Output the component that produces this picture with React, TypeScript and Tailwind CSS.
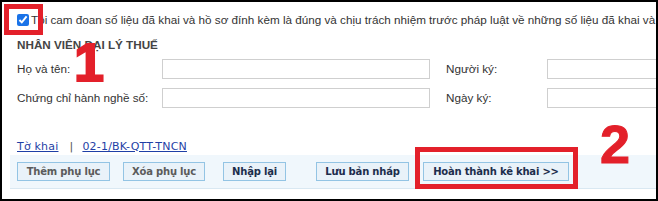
const btn =
  "h-[19px] shrink-0 border border-[#93c4e4] bg-[#e9f2f9] font-['DejaVu_Sans',Verdana,sans-serif] text-[10px] font-bold leading-[17px] tracking-[-0.2px]";

export default function App() {
  return (
    <div className="relative h-[201px] w-[658px] overflow-hidden border-2 border-black bg-white font-['Liberation_Sans',Arial,sans-serif] text-[11.7px] text-[#333]">
      {/* cam đoan */}
      <div className="flex h-[36px] items-center gap-[2px] whitespace-nowrap pl-[15px]">
        <input type="checkbox" defaultChecked readOnly className="h-[12px] w-[12px] shrink-0 accent-[#1a73e8]" />
        <span>
          Tôi cam đoan số liệu đã khai và hồ sơ đính kèm là đúng và chịu trách nhiệm trước pháp luật về những số liệu đã khai và hồ sơ đính kèm
        </span>
      </div>

      <div className="pl-[15px] text-[11.7px] font-bold leading-[14px] text-[#444]">NHÂN VIÊN ĐẠI LÝ THUẾ</div>

      {/* form */}
      <div className="mt-[7px] flex flex-col gap-[9px] pl-[15px] whitespace-nowrap">
        <div className="flex h-[20px] items-center">
          <span className="w-[145px] shrink-0">Họ và tên:</span>
          <div className="h-[20px] w-[268px] shrink-0 border border-[#cfcfcf] bg-white" />
          <span className="ml-[16px] w-[101px] shrink-0">Người ký:</span>
          <div className="h-[20px] w-[140px] shrink-0 border border-[#cfcfcf] bg-white" />
        </div>
        <div className="flex h-[20px] items-center">
          <span className="w-[145px] shrink-0">Chứng chỉ hành nghề số:</span>
          <div className="h-[20px] w-[268px] shrink-0 border border-[#cfcfcf] bg-white" />
          <span className="ml-[16px] w-[101px] shrink-0">Ngày ký:</span>
          <div className="h-[20px] w-[140px] shrink-0 border border-[#cfcfcf] bg-white" />
        </div>
      </div>

      {/* links */}
      <div className="mt-[32px] flex h-[14px] items-center pl-[15px] font-['DejaVu_Sans',Verdana,sans-serif] text-[11px] tracking-[0.2px] text-[#555]">
        <a className="text-[#1f3fa6] underline">Tờ khai</a>
        <span className="ml-[11px]">|</span>
        <a className="ml-[9px] text-[#1f3fa6] underline">02-1/BK-QTT-TNCN</a>
      </div>

      {/* buttons */}
      <div className="ml-[8px] mt-[1px] flex h-[34px] items-start border-b border-[#d9e8f2] bg-[#f0f7fc] pl-[7px] pt-[7px]">
        <button className={`${btn} w-[93px] text-[#5b5b5b]`}>Thêm phụ lục</button>
        <button className={`${btn} ml-[13px] w-[82px] text-[#5b5b5b]`}>Xóa phụ lục</button>
        <button className={`${btn} ml-[18px] w-[63px] text-[#1c2d4c]`}>Nhập lại</button>
        <button className={`${btn} ml-[30px] w-[93px] text-[#1c2d4c]`}>Lưu bản nháp</button>
        <button className={`${btn} ml-[14px] w-[146px] text-[#1c2d4c]`}>Hoàn thành kê khai &gt;&gt;</button>
      </div>

      {/* annotations */}
      <div className="pointer-events-none absolute left-[2px] top-[2px] h-[31px] w-[39px] border-[5px] border-[#e3202a]" />
      <div className="pointer-events-none absolute left-[413px] top-[145px] h-[42px] w-[163px] border-[5px] border-[#e3202a]" />
      <div className="pointer-events-none absolute left-[72px] top-[33px] text-[54px] font-bold leading-none text-[#e3202a] [-webkit-text-stroke:2px_#e3202a]">
        1
      </div>
      <div className="pointer-events-none absolute left-[598px] top-[115px] text-[54px] font-bold leading-none text-[#e3202a] [-webkit-text-stroke:1px_#e3202a]">
        2
      </div>
    </div>
  );
}
